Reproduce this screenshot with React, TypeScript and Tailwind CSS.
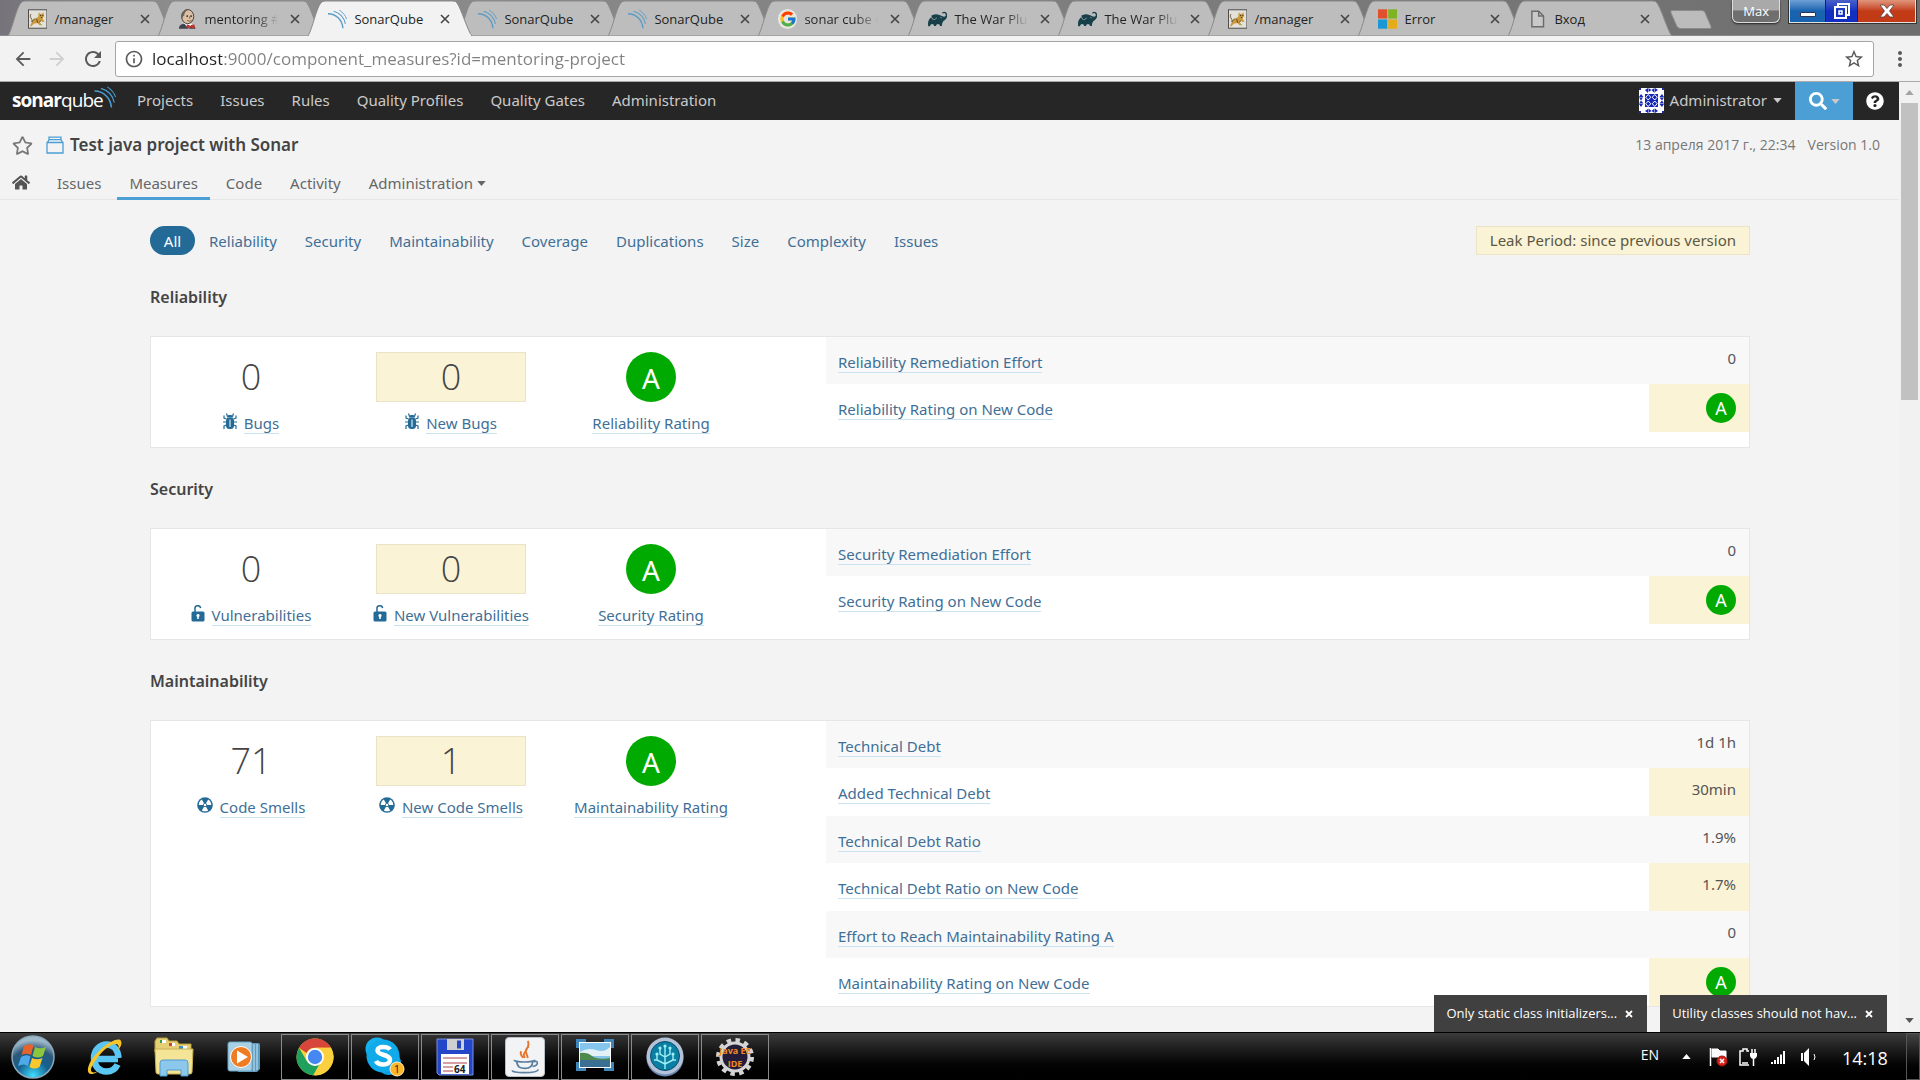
import React, { type ReactNode } from "react";
import { FaHome, FaQuestionCircle, FaRegStar, FaSearch } from "react-icons/fa";
import { FcGoogle } from "react-icons/fc";
import { SiGradle } from "react-icons/si";
import { MdArrowBack, MdArrowForward, MdInfoOutline, MdRefresh, MdStarBorder, MdMoreVert } from "react-icons/md";

/* ---------- small drawings ---------- */

function SonarWaves({ className, color = "#4b9fd5" }: { className: string; color?: string }) {
  return (
    <svg viewBox="0 0 24 24" className={className} fill="none" stroke={color} aria-hidden="true">
      <path d="M0 5.500C10 5.500 17.500 13 18.500 23.500" strokeWidth="1.700" />
      <path d="M7 2.500C14 4.500 20 10 21.500 18" strokeWidth="1.400" />
      <path d="M14 1C18.500 4 21.500 7.500 23 12" strokeWidth="1.100" />
    </svg>
  );
}

function Tomcat() {
  return (
    <svg viewBox="0 0 20 20" className="size-5" aria-hidden="true">
      <rect x="0.500" y="0.500" width="19" height="19" fill="#e4e2dc" stroke="#4a4a4a" />
      <path d="M11 3l1.500 1.500h2L16 3l.5 4-1.500 2.500 2 3.500h-2l-2-1.500-1 2 3 3h-3L9.500 14 6 15l-2.500 2.500H2L4 13l3-3.500 3.500-1.500z" fill="#c99a3f" />
      <path d="M3 5c-2 4 2 4 1 8M4 13l3-3.500M9 10l1 4M13 11.500l-1 2" stroke="#5c4315" strokeWidth="0.900" fill="none" />
      <path d="M12.500 6.500h1M14.800 6.500h1M13.500 8.500h1" stroke="#2b2110" />
    </svg>
  );
}

function Jenkins() {
  return (
    <svg viewBox="0 0 20 20" className="size-5" aria-hidden="true">
      <path d="M1 20c0-4 3-5 7-5s10 1 10 5z" fill="#3d4550" />
      <path d="M6 14l5 6 4-5z" fill="#fff" />
      <ellipse cx="10" cy="7.500" rx="6.200" ry="7.300" fill="#dcc0a4" stroke="#3b3028" strokeWidth="0.900" />
      <path d="M4 10C2 4 6 0 11 .5 8 1.500 6.500 3.500 6.500 6.500L5.500 7z" fill="#6f6258" />
      <circle cx="9.500" cy="7" r="0.900" fill="#222" />
      <circle cx="13.500" cy="7" r="0.900" fill="#222" />
      <path d="M9.500 11.500c2 1 3.500.8 4.500 0M12 7.500v2" stroke="#5c3a2a" strokeWidth="0.800" fill="none" />
      <path d="M9 15.500l4 1.500 4-1.500V20l-4-1.500L9 20z" fill="#c8322b" />
    </svg>
  );
}

function MicrosoftMark() {
  return (
    <svg viewBox="0 0 20 20" className="size-5" aria-hidden="true">
      <path d="M0 0h9.500v9.500H0z" fill="#e0502f" />
      <path d="M10.500 0H20v9.500h-9.500z" fill="#7fb421" />
      <path d="M0 10.500h9.500V20H0z" fill="#1a97d5" />
      <path d="M10.500 10.500H20V20h-9.500z" fill="#e5ac18" />
    </svg>
  );
}

function BlankPage() {
  return (
    <svg viewBox="0 0 20 20" className="size-5" fill="#c9c9c9" stroke="#6b6b6b" strokeWidth="1.500" aria-hidden="true">
      <path d="M4 2h7l5 5v11H4z" />
      <path d="M11 2v5h5" fill="none" />
    </svg>
  );
}

function GoogleMark() {
  return (
    <span className="flex size-5 items-center justify-center rounded-full bg-[#e6e6e6]">
      <FcGoogle className="size-[18px]" />
    </span>
  );
}

function Caret({ className }: { className: string }) {
  return (
    <svg viewBox="0 0 10 6" className={className} fill="currentColor" aria-hidden="true">
      <path d="M0 0h10L5 6z" />
    </svg>
  );
}

function BugIcon() {
  return (
    <svg viewBox="0 0 14 17" className="h-[17px] w-3.5" aria-hidden="true">
      <path
        d="M4.500 3.500L3.500.5M9.500 3.500l1-3M3.500 6L1 5V2.500M10.500 6L13 5V2.500M3 9H0M11 9h3M3.500 12L1 13v3M10.500 12l2.500 1v3"
        stroke="#236a97"
        strokeWidth="1.200"
        fill="none"
      />
      <path d="M4 4.500C4 2.500 5.300 2 7 2s3 .5 3 2.500z" fill="#236a97" />
      <rect x="3" y="4.500" width="8" height="11.500" rx="3.500" fill="#236a97" />
      <path d="M7 6.500V14" stroke="#fff" strokeWidth="1" />
    </svg>
  );
}

function UnlockIcon() {
  return (
    <svg viewBox="0 0 14 17" className="h-[17px] w-3.5" aria-hidden="true">
      <path d="M4 8V4a2.800 2.800 0 0 1 5.600-.8" stroke="#236a97" strokeWidth="1.500" fill="none" />
      <rect x="0.500" y="6.500" width="13" height="10" rx="1.500" fill="#236a97" />
      <path d="M7 9a1.600 1.600 0 0 1 .8 3v2H6.200v-2A1.600 1.600 0 0 1 7 9z" fill="#fff" />
    </svg>
  );
}

function SmellIcon() {
  return (
    <svg viewBox="0 0 16 16" className="size-4" aria-hidden="true">
      <circle cx="8" cy="8" r="7.800" fill="#236a97" />
      <path d="M7 6.200L4.800 2.600A6.300 6.300 0 0 0 1.800 8H6c0-.8.300-1.400 1-1.800z" fill="#fff" />
      <path d="M9 6.200l2.200-3.600a6.300 6.300 0 0 1 3 5.400H10c0-.8-.3-1.400-1-1.800z" fill="#fff" />
      <path d="M7 9.800l-2.200 3.600a6.300 6.300 0 0 0 6.400 0L9 9.800c-.6.400-1.400.4-2 0z" fill="#fff" />
      <circle cx="8" cy="8" r="1.300" fill="#fff" />
    </svg>
  );
}

function Identicon() {
  return (
    <svg viewBox="0 0 50 50" className="size-[25px]" aria-hidden="true">
      <rect width="50" height="50" fill="#fff" />
      <g fill="#1627b5">
        <path d="M12 12h26v26H12zM0 0h4v4H0zM46 0h4v4h-4zM0 46h4v4H0zM46 46h4v4h-4z" />
        <path d="M12 4l6-4v10zM25 4l-6 4V0zM25 4l6-4v10zM38 4l-6 4V0z" />
        <path d="M12 46l6-4v8zM25 46l-6 4v-9zM25 46l6-5v9zM38 46l-6 4v-9z" />
        <path d="M4 12l-4 6h9zM4 25l4-6H0zM4 25l-4 6h9zM4 38l4-6H0z" />
        <path d="M46 12l-5 6h9zM46 25l4-6h-9zM46 25l-5 6h9zM46 38l4-6h-9z" />
      </g>
      <g fill="none" stroke="#fff" strokeWidth="2">
        <path d="M18.500 13l5 5.500-5 5.500-5-5.500zM31.500 13l5 5.500-5 5.500-5-5.500zM18.500 26l5 5.500-5 5.500-5-5.500zM31.500 26l5 5.500-5 5.500-5-5.500z" />
      </g>
    </svg>
  );
}

function ProjectIcon() {
  return (
    <svg viewBox="0 0 18 18" className="size-[18px]" fill="none" stroke="#4b9fd5" strokeWidth="1.300" aria-hidden="true">
      <path d="M1 6.500h16V17H1zM1.500 6.500L3 3.700h12l1.500 2.800M3 3.700V1.200h12v2.500" />
    </svg>
  );
}

/* ---------- browser chrome ---------- */

type Tab = { title: string; icon: ReactNode; active?: boolean; fade?: boolean };

const waves = <SonarWaves className="size-5" color="#5a9cc4" />;
const gradle = <SiGradle className="size-5 text-[#17404a]" />;

const tabs: Tab[] = [
  { title: "/manager", icon: <Tomcat /> },
  { title: "mentoring #", icon: <Jenkins />, fade: true },
  { title: "SonarQube", icon: waves, active: true },
  { title: "SonarQube", icon: waves },
  { title: "SonarQube", icon: waves },
  { title: "sonar cube c", icon: <GoogleMark />, fade: true },
  { title: "The War Plu", icon: gradle, fade: true },
  { title: "The War Plu", icon: gradle, fade: true },
  { title: "/manager", icon: <Tomcat /> },
  { title: "Error", icon: <MicrosoftMark /> },
  { title: "Вход", icon: <BlankPage /> },
];

function BrowserTab({ tab }: { tab: Tab }) {
  return (
    <div className={tab.active ? "relative z-10 h-9 w-[150px] shrink-0" : "relative h-9 w-[150px] shrink-0"}>
      <svg viewBox="0 0 164 36" className="absolute left-0 top-0 h-9 w-[164px]" aria-hidden="true">
        <path
          d="M0 36C4 30 9 6 13 3q1-2 4-2h128q3 0 4 2C153 8 160 32 164 36z"
          fill={tab.active ? "#f2f2f2" : "#bdbdbd"}
          stroke="#8a8a8a"
        />
        {tab.active && <path d="M1 35.500h162" stroke="#f2f2f2" strokeWidth="2" />}
      </svg>
      <div className="relative flex h-[35px] w-[142px] items-center pl-5 pt-0.5">
        {tab.icon}
        <button
          type="button"
          className={
            tab.fade
              ? "ml-[7px] w-20 whitespace-nowrap bg-linear-to-r from-[#222] from-65% to-[#bdbdbd] to-95% bg-clip-text text-left text-[13px] leading-5 text-transparent"
              : "ml-[7px] w-20 whitespace-nowrap text-left text-[13px] leading-5 text-[#222]"
          }
        >
          {tab.title}
        </button>
        <button type="button" aria-label={"Close " + tab.title} className="ml-2 text-[#444]">
          <svg viewBox="0 0 10 10" className="size-2.5" stroke="currentColor" strokeWidth="1.600" aria-hidden="true">
            <path d="M1 1l8 8M9 1L1 9" />
          </svg>
        </button>
      </div>
    </div>
  );
}

function WindowControls() {
  return (
    <div className="ml-auto flex items-start">
      <button
        type="button"
        className="h-[23px] rounded-b-md border border-t-0 border-[#dcdcdc] bg-linear-to-b from-[#a9a9a9] from-45% to-[#6f6f6f] to-50% px-2.5 text-[13px] leading-5 text-white shadow-[0_1px_2px_#222]"
      >
        Max
      </button>
      <div className="ml-[9px] mr-1 flex h-[23px] border border-t-0 border-[#e2e2e2] outline-1 outline-[#333]">
        <button type="button" aria-label="Minimize" className="flex w-9 items-center justify-center border-r border-[#223] bg-linear-to-b from-[#6da0d6] to-[#1763b0] to-50%">
          <svg viewBox="0 0 16 16" className="size-4" aria-hidden="true">
            <path d="M0.500 9.500h15v4H.5z" fill="#fff" stroke="#335" />
          </svg>
        </button>
        <button type="button" aria-label="Restore" className="flex w-8 items-center justify-center border-r border-[#223] bg-linear-to-b from-[#4a5fc9] to-[#122fc0] to-50%">
          <svg viewBox="0 0 18 18" className="size-[18px]" fill="none" stroke="#fff" strokeWidth="2" aria-hidden="true">
            <path d="M5 4V2h11v11h-2" />
            <path d="M2 5h11v11H2z" />
            <path d="M6 9h3v3H6z" strokeWidth="1.500" />
          </svg>
        </button>
        <button type="button" aria-label="Close" className="flex w-[57px] items-center justify-center bg-linear-to-b from-[#e0957c] to-[#c23a16] to-50%">
          <svg viewBox="0 0 16 16" className="size-4" aria-hidden="true">
            <path d="M1 2h4l3 3.500L11 2h4L10.500 8l4.500 6h-4L8 10.500 5 14H1l4.500-6z" fill="#fff" stroke="#544" strokeWidth="0.800" />
          </svg>
        </button>
      </div>
    </div>
  );
}

function BrowserChrome() {
  return (
    <div className="shrink-0">
      <div className="flex h-9 border-b border-[#8a8a8a] bg-linear-to-r from-[#77737b] via-[#8f8f8f] via-10% to-[#6e6e6e] pl-2">
        {tabs.map((tab, i) => (
          <BrowserTab key={i} tab={tab} />
        ))}
        <button type="button" aria-label="New tab" className="ml-3 mt-2.5 h-[19px] self-start">
          <svg viewBox="0 0 42 19" className="h-[19px] w-[42px]" aria-hidden="true">
            <path d="M2 .5h30q2 0 3 2l6 14q1 2-2 2H11q-3 0-4-2L1 3Q0 1 2 .5z" fill="#bcbcbc" stroke="#8c8c8c" />
          </svg>
        </button>
        <WindowControls />
      </div>
      <div className="flex h-[46px] items-center border-b border-[#a9a9a9] bg-[#f2f2f2] pl-3 pr-3 text-[#5a5a5a]">
        <button type="button" aria-label="Back"><MdArrowBack className="size-[22px]" /></button>
        <button type="button" aria-label="Forward" className="ml-3 text-[#cfcfcf]"><MdArrowForward className="size-[22px]" /></button>
        <button type="button" aria-label="Reload" className="ml-[13px]"><MdRefresh className="size-6" /></button>
        <div className="ml-2.5 flex h-9 flex-1 items-center rounded-[3px] border border-[#a6a6a6] bg-white px-2">
          <MdInfoOutline className="size-5" />
          <input
            aria-label="Address"
            defaultValue="localhost:9000/component_measures?id=mentoring-project"
            className="ml-2 min-w-0 flex-1 bg-linear-to-r from-[#222] from-[70px] to-[#808080] to-[70px] bg-clip-text text-[17px] text-transparent outline-none"
          />
          <button type="button" aria-label="Bookmark"><MdStarBorder className="size-[22px]" /></button>
        </div>
        <button type="button" aria-label="Menu" className="ml-3.5"><MdMoreVert className="-mr-1 size-6" /></button>
      </div>
    </div>
  );
}

/* ---------- SonarQube page ---------- */

const mainNav = ["Projects", "Issues", "Rules", "Quality Profiles", "Quality Gates", "Administration"];

function TopNav() {
  return (
    <nav className="flex h-[38px] items-center gap-px bg-[#262626] pb-px text-[15px] text-[#cacaca]">
      <a href="#home" className="flex w-[123px] items-center pl-3 font-['Open_Sans',sans-serif] text-[19px] text-white" aria-label="sonarqube">
        <span className="font-bold tracking-tighter">sonar</span>
        <span className="tracking-tighter">qube</span>
        <SonarWaves className="-ml-2.5 mb-2 h-[22px] w-[25px] shrink-0" />
      </a>
      {mainNav.map((item) => (
        <a key={item} href="#nav" className="px-[13px]">{item}</a>
      ))}
      <a href="#account" className="ml-auto flex items-center pr-3">
        <Identicon />
        <span className="ml-1.5 mr-1.5">Administrator</span>
        <Caret className="h-[5px] w-[9px]" />
      </a>
      <button type="button" aria-label="Search" className="-mb-px flex h-[38px] w-[58px] items-center justify-center gap-1 bg-[#4b9fd5]">
        <FaSearch className="size-[18px] text-white" />
        <Caret className="h-[5px] w-[9px]" />
      </button>
      <button type="button" aria-label="Help" className="flex h-full w-[45px] items-center justify-center pr-1 text-white">
        <FaQuestionCircle className="size-[18px]" />
      </button>
    </nav>
  );
}

const projectTabs = [
  { label: "Issues" },
  { label: "Measures", active: true },
  { label: "Code" },
  { label: "Activity" },
  { label: "Administration", menu: true },
];

function ProjectHeader() {
  return (
    <header className="border-b border-[#e6e6e6]">
      <div className="flex h-[50px] items-center pl-3 pr-[19px]">
        <button type="button" aria-label="Favorite" className="text-[#777]"><FaRegStar className="size-[21px]" /></button>
        <span className="ml-[13px]"><ProjectIcon /></span>
        <h1 className="ml-1.5 text-[17px] font-semibold text-[#444]">Test java project with Sonar</h1>
        <span className="ml-auto font-['Open_Sans',sans-serif] text-sm text-[#777]">13 апреля 2017 г., 22:34</span>
        <span className="ml-3 font-['Open_Sans',sans-serif] text-sm text-[#777]">Version 1.0</span>
      </div>
      <nav className="flex h-[29px] pl-3 text-[15px] text-[#666]">
        <a href="#home" aria-label="Home" className="mr-[15px] flex w-[18px] items-center pb-1 text-[#555]">
          <FaHome className="size-[19px]" />
        </a>
        {projectTabs.map((tab) => (
          <a
            key={tab.label}
            href="#tab"
            className={
              tab.active
                ? "-mb-px mr-1 flex h-[30px] items-center border-b-3 border-[#4b9fd5] px-3"
                : "-mb-px mr-1 flex h-[30px] items-center border-b-3 border-transparent px-3"
            }
          >
            {tab.label}
            {tab.menu && <Caret className="ml-1 h-[5px] w-[9px]" />}
          </a>
        ))}
      </nav>
    </header>
  );
}

const filters = ["Reliability", "Security", "Maintainability", "Coverage", "Duplications", "Size", "Complexity", "Issues"];

function Filters() {
  return (
    <div className="flex h-[29px] items-center text-[15px] text-[#3f6f96]">
      <a href="#all" className="flex h-full w-[45px] items-center justify-center rounded-full bg-[#236a97] pt-0.5 text-white">All</a>
      {filters.map((f) => (
        <a key={f} href="#filter" className="px-3.5 pt-0.5">{f}</a>
      ))}
      <span className="ml-auto flex h-full items-center border border-[#eae3c7] bg-[#fbf3d5] px-[13px] text-[#5a5844]">
        Leak Period: since previous version
      </span>
    </div>
  );
}

type Metric = { label: string; value: string; leak?: boolean; rating?: boolean };
type Domain = { name: string; icon: ReactNode; main: [string, string]; fresh: [string, string]; metrics: Metric[] };

const domains: Domain[] = [
  {
    name: "Reliability",
    icon: <BugIcon />,
    main: ["0", "Bugs"],
    fresh: ["0", "New Bugs"],
    metrics: [
      { label: "Reliability Remediation Effort", value: "0" },
      { label: "Reliability Rating on New Code", value: "A", leak: true, rating: true },
    ],
  },
  {
    name: "Security",
    icon: <UnlockIcon />,
    main: ["0", "Vulnerabilities"],
    fresh: ["0", "New Vulnerabilities"],
    metrics: [
      { label: "Security Remediation Effort", value: "0" },
      { label: "Security Rating on New Code", value: "A", leak: true, rating: true },
    ],
  },
  {
    name: "Maintainability",
    icon: <SmellIcon />,
    main: ["71", "Code Smells"],
    fresh: ["1", "New Code Smells"],
    metrics: [
      { label: "Technical Debt", value: "1d 1h" },
      { label: "Added Technical Debt", value: "30min", leak: true },
      { label: "Technical Debt Ratio", value: "1.9%" },
      { label: "Technical Debt Ratio on New Code", value: "1.7%", leak: true },
      { label: "Effort to Reach Maintainability Rating A", value: "0" },
      { label: "Maintainability Rating on New Code", value: "A", leak: true, rating: true },
    ],
  },
];

function MeasureLink({ children }: { children: ReactNode }) {
  return (
    <a href="#measure" className="block w-fit whitespace-nowrap border-b border-[#cae3f2] text-[15px] leading-5 text-[#3f6f96]">
      {children}
    </a>
  );
}

function Figure({ value, label, icon, leak }: { value: ReactNode; label: string; icon?: ReactNode; leak?: boolean }) {
  return (
    <div className="flex w-[200px] shrink-0 flex-col items-center">
      <div
        className={
          leak
            ? "flex h-[50px] w-[150px] items-center justify-center border border-[#eae3c7] bg-[#fbf3d5]"
            : "flex h-[50px] w-[150px] items-center justify-center"
        }
      >
        {value}
      </div>
      <div className="mt-[11px] flex items-start gap-[7px]">
        {icon}
        <MeasureLink>{label}</MeasureLink>
      </div>
    </div>
  );
}

function BigNumber({ children }: { children: ReactNode }) {
  return <span className="font-['Open_Sans',sans-serif] text-4xl font-light text-[#444]">{children}</span>;
}

function DomainSection({ domain }: { domain: Domain }) {
  return (
    <section className="flex flex-col gap-[27px]">
      <h2 className="text-base font-semibold text-[#444]">{domain.name}</h2>
      <div className="flex border border-[#e6e6e6] bg-white">
        <div className="flex w-[675px] shrink-0 pb-[13px] pt-[15px]">
          <Figure value={<BigNumber>{domain.main[0]}</BigNumber>} label={domain.main[1]} icon={domain.icon} />
          <Figure value={<BigNumber>{domain.fresh[0]}</BigNumber>} label={domain.fresh[1]} icon={domain.icon} leak />
          <Figure
            value={
              <span className="flex size-[50px] items-center justify-center rounded-full bg-[#0a0] pt-0.5 text-[28px] leading-none text-white">A</span>
            }
            label={domain.name + " Rating"}
          />
        </div>
        <table className="flex-1 self-start">
          <tbody className="block">
            {domain.metrics.map((m) => (
              <tr key={m.label} className="flex odd:h-[47px] odd:bg-[#f8f8f8] even:h-12">
                <td className="flex-1 pl-3 pt-[15px]">
                  <MeasureLink>{m.label}</MeasureLink>
                </td>
                <td
                  className={
                    m.leak
                      ? "flex w-[100px] justify-end bg-[#fbf3d5] pr-[13px] pt-[9px] text-[15px] leading-6 text-[#555]"
                      : "flex w-[100px] justify-end pr-[13px] pt-[9px] text-[15px] leading-6 text-[#555]"
                  }
                >
                  {m.rating ? (
                    <span className="flex size-[30px] items-center justify-center rounded-full bg-[#0a0] text-lg leading-none text-white">A</span>
                  ) : (
                    m.value
                  )}
                </td>
              </tr>
            ))}
          </tbody>
        </table>
      </div>
    </section>
  );
}

function ScrollBar() {
  return (
    <div className="flex w-[21px] shrink-0 flex-col items-center bg-[#f1f1f1] text-[#555]">
      <div className="flex h-[21px] items-center"><Caret className="h-[5px] w-[9px] rotate-180 text-[#a3a3a3]" /></div>
      <div className="h-[297px] w-[17px] bg-[#c1c1c1]" />
      <div className="mt-auto flex h-6 items-center"><Caret className="h-[5px] w-[9px]" /></div>
    </div>
  );
}

function Toast({ children }: { children: ReactNode }) {
  return (
    <div className="flex h-[37px] items-center gap-2 bg-[#404040] pl-3 pr-3.5 text-[13px] text-white">
      {children}
      <button type="button" aria-label="Dismiss">
        <svg viewBox="0 0 8 8" className="size-2" stroke="currentColor" strokeWidth="1.800" aria-hidden="true">
          <path d="M1 1l6 6M7 1L1 7" />
        </svg>
      </button>
    </div>
  );
}

/* ---------- Windows taskbar ---------- */

function StartOrb() {
  return (
    <svg viewBox="0 0 44 44" className="size-11" aria-hidden="true">
      <defs>
        <radialGradient id="orb" cx="50%" cy="95%" r="85%">
          <stop offset="0" stopColor="#3fe0ff" />
          <stop offset="0.450" stopColor="#14608f" />
          <stop offset="0.750" stopColor="#2d5878" />
          <stop offset="1" stopColor="#9db8c9" />
        </radialGradient>
      </defs>
      <circle cx="22" cy="22" r="21" fill="url(#orb)" stroke="#8aa9bd" strokeWidth="1.500" />
      <path d="M13 11q5-3 9.500-.5L20 20q-5-2.500-9.500 0z" fill="#e8622c" />
      <path d="M24 12q5 2.500 11 0l-3 9q-5 3-10.500 0z" fill="#8cc63f" />
      <path d="M10 22q5-3 9.500-.5L17 31q-4-3-10 0z" fill="#4fa9e8" />
      <path d="M21 23q5 2.500 10.500 0L28.500 32q-5 3-10 0z" fill="#fdc82f" />
    </svg>
  );
}

function ExplorerE() {
  return (
    <svg viewBox="0 0 40 40" className="size-10" fill="none" aria-hidden="true">
      <path d="M34 22H13M34.500 21C34 12 29 7.500 22.500 7.500S10 13 10 21s5 13.500 12.500 13.500c5 0 9-2.500 11-7" stroke="#5cc6f2" strokeWidth="6.500" />
      <path d="M7 37C1 36 4 25 14 15S35 0 37 4c1.500 3-1 7-3 9 1-3 1-6-2-6-5 0-13 6-18 13S5 33 8 35c2 1 4 0 6-1-2 2-5 3.500-7 3z" fill="#f6c52c" />
    </svg>
  );
}

function FolderIcon() {
  return (
    <svg viewBox="0 0 40 40" className="size-10" aria-hidden="true">
      <path d="M1 4l2-3h10l2 3h8l2 3h12v8H1z" fill="#e5cf74" stroke="#b79c3c" />
      <path d="M6 3h6v3H6zM15 6h6v3h-6zM25 9h8v3h-8z" fill="#fff" />
      <path d="M6 3h2v3H6z" fill="#38a048" />
      <path d="M15 6h3v3h-3z" fill="#d0442e" />
      <path d="M25 9h4v3h-4z" fill="#3a8fd0" />
      <path d="M1 12h38l-1 23q0 2-2 2H4q-2 0-2-2z" fill="#f4e496" stroke="#c9b052" />
      <path d="M6 39V26q0-3 3-3h22q3 0 3 3v13h-7v-6H13v6z" fill="#8cc8ec" stroke="#4f9bd0" />
    </svg>
  );
}

function MediaPlayer() {
  return (
    <svg viewBox="0 0 36 36" className="size-9" aria-hidden="true">
      <path d="M12 4h20q2 0 2 2v24l-3 3H12z" fill="#5a9cc0" />
      <path d="M28 5v27M31 5v26" stroke="#cfe7f3" />
      <rect x="2" y="3" width="24" height="29" rx="2" fill="#a9d0e4" stroke="#6ba3c2" />
      <circle cx="15" cy="18" r="10.500" fill="#ef7b22" stroke="#fff" />
      <path d="M11 11.500l11 6.500-11 6.500z" fill="#fff" />
    </svg>
  );
}

function ChromeIcon() {
  return (
    <svg viewBox="0 0 40 40" className="size-10" aria-hidden="true">
      <circle cx="20" cy="20" r="18.500" fill="#fbd03f" />
      <path d="M4 10.700A18.500 18.500 0 0 1 36 10.700H20a9.300 9.300 0 0 0-8.500 5.300z" fill="#d8453a" />
      <path d="M4 10.700a18.500 18.500 0 0 0 14 27.700l8-13.800a9.300 9.300 0 0 1-14 0z" fill="#1fa15d" />
      <path d="M36 10.700H20a9.300 9.300 0 0 1 8 13.900l-8 13.900A18.500 18.500 0 0 0 36 10.700z" fill="#fbd03f" />
      <circle cx="20" cy="20" r="9" fill="#fff" />
      <circle cx="20" cy="20" r="7.200" fill="#4688f1" />
    </svg>
  );
}

function SkypeIcon() {
  return (
    <svg viewBox="0 0 42 42" className="size-[42px]" aria-hidden="true">
      <circle cx="13" cy="13" r="11.500" fill="#16b1ef" />
      <circle cx="25" cy="27" r="12" fill="#0c9fe0" />
      <circle cx="19" cy="20" r="16.500" fill="#10a9e9" />
      <path d="M26 13.500c-2-3-12-4-12.500 1-.3 5 12.500 3.500 12.500 9.500 0 6-12 5.500-14 1" fill="none" stroke="#fff" strokeWidth="4.500" />
      <circle cx="33" cy="33" r="7" fill="#fdb52b" stroke="#fff0c8" />
      <text x="33" y="37" textAnchor="middle" fontSize="11" fill="#222">1</text>
    </svg>
  );
}

function FloppyIcon() {
  return (
    <svg viewBox="0 0 38 38" className="size-[38px]" aria-hidden="true">
      <path d="M1 1h36v36H3l-2-2z" fill="#2446c8" stroke="#7d8fd8" />
      <path d="M11 1h17v11H11z" fill="#cfcfd2" />
      <path d="M21 2.500h4v8h-4z" fill="#2446c8" />
      <path d="M5 16h28v20H5z" fill="#fff" />
      <path d="M7 20h24M7 25h24M7 29h10M7 33h10" stroke="#b04048" />
      <text x="18" y="35" fontSize="10" fontWeight="700" fill="#222">64</text>
    </svg>
  );
}

function JavaIcon() {
  return (
    <span className="flex size-10 items-center justify-center rounded border border-[#b9bfc8] bg-[#f1f3f5]">
      <svg viewBox="0 0 40 40" className="size-10" fill="none" stroke="#5b7f9e" strokeWidth="1.800" aria-hidden="true">
        <path d="M20 21c-5-6 7-9 3-18M24 9c-5 4-3 5-1 12M16 14c-2 3 1 5 2 7" stroke="#e5762b" strokeWidth="2" />
        <path d="M9 23c-2 3 22 3 21 0M11 24c1 7 4 8 9 8s8-2 8-7M29 25c6-2 5 4-1 5" />
        <path d="M7 34c-3 3 26 4 27-1" />
      </svg>
    </span>
  );
}

function PictureIcon() {
  return (
    <svg viewBox="0 0 38 32" className="mb-1 h-8 w-[38px]" aria-hidden="true">
      <path d="M0 0h10v9H0zM28 0h10v9H28zM0 23h10v9H0zM28 23h10v9H28z" fill="#3f86bb" />
      <rect x="3" y="3" width="32" height="26" fill="#fff" />
      <rect x="4" y="4" width="30" height="24" fill="#86c5ee" />
      <path d="M4 13q8-5 16-2t14-3v9H4z" fill="#e4f2f8" />
      <path d="M4 14q7-1 12 3t18 2v3H4z" fill="#4f8a4d" />
      <path d="M4 21h30v7H4z" fill="#3a6f93" />
    </svg>
  );
}

function TreeDisc() {
  return (
    <svg viewBox="0 0 40 40" className="size-10" aria-hidden="true">
      <circle cx="20" cy="21" r="18.500" fill="#6c86b0" />
      <circle cx="20" cy="19" r="18.500" fill="#b4c2d8" />
      <circle cx="20" cy="19" r="14.500" fill="#0b7fa3" stroke="#0a4d70" />
      <path
        d="M20 32V9M20 27l8-4v-5M20 27l-8-4v-5M20 20l5-3v-6M20 20l-5-3v-6M28 23h3M12 23H9"
        stroke="#9ff0f2"
        strokeWidth="1.400"
        fill="none"
      />
      <g fill="#9ff0f2">
        <circle cx="20" cy="9" r="1.600" /><circle cx="28" cy="17" r="1.600" /><circle cx="12" cy="17" r="1.600" />
        <circle cx="25" cy="11" r="1.600" /><circle cx="15" cy="11" r="1.600" />
      </g>
    </svg>
  );
}

function EclipseGear() {
  return (
    <svg viewBox="0 0 40 40" className="size-10" aria-hidden="true">
      <circle cx="20" cy="20" r="17" fill="none" stroke="#d4d4d4" strokeWidth="4" strokeDasharray="4.500 4.400" />
      <circle cx="20" cy="20" r="14" fill="#241b38" stroke="#d4d4d4" strokeWidth="3" />
      <text x="20" y="17" textAnchor="middle" fontSize="9" fontWeight="700" fill="#f08a24">Java EE</text>
      <text x="20" y="30" textAnchor="middle" fontSize="9" fontWeight="700" fill="#f08a24">IDE</text>
    </svg>
  );
}

const pinned = [
  { name: "Internet Explorer", icon: <ExplorerE /> },
  { name: "Explorer", icon: <FolderIcon /> },
  { name: "Media Player", icon: <MediaPlayer /> },
];

const running = [
  { name: "Chrome", icon: <ChromeIcon /> },
  { name: "Skype", icon: <SkypeIcon /> },
  { name: "Total Commander", icon: <FloppyIcon /> },
  { name: "Java", icon: <JavaIcon /> },
  { name: "Pictures", icon: <PictureIcon /> },
  { name: "SourceTree", icon: <TreeDisc /> },
  { name: "Eclipse", icon: <EclipseGear /> },
];

function Taskbar() {
  return (
    <footer className="flex h-12 shrink-0 items-center border-t border-black bg-linear-to-b from-[#3c3c3c] via-[#111] via-50% to-black text-white">
      <button type="button" aria-label="Start" className="ml-[11px] mr-3.5"><StartOrb /></button>
      <div className="mr-0.5 flex">
        {pinned.map((p) => (
          <button key={p.name} type="button" aria-label={p.name} className="flex h-[46px] w-[70px] items-center justify-center">{p.icon}</button>
        ))}
      </div>
      <div className="flex gap-0.5">
        {running.map((r) => (
          <button
            key={r.name}
            type="button"
            aria-label={r.name}
            className="flex h-[46px] w-[68px] items-center justify-center border border-[#8a8a8a] bg-linear-to-b from-[#333] via-[#0c0c0c] via-50% to-black"
          >
            {r.icon}
          </button>
        ))}
      </div>
      <div className="ml-auto flex h-full items-center">
        <span className="mb-1 text-sm">EN</span>
        <Caret className="ml-[23px] h-[5px] w-[9px] rotate-180" />
        <svg viewBox="0 0 110 20" className="ml-[18px] h-5 w-[110px]" fill="none" stroke="#fff" aria-hidden="true">
          <path d="M1.500 1v18" strokeWidth="1.500" />
          <path d="M3 2h6l2 2h6v8h-6l-2-2H3z" fill="#fff" />
          <circle cx="13" cy="14" r="5" fill="#d8231c" stroke="#a11" />
          <path d="M11 12l4 4M15 12l-4 4" strokeWidth="1.500" />
          <path d="M40 4h-2V2h-4v2h-3v14h9" strokeWidth="1.500" />
          <path d="M33 16h6M43 2v4M46 2v4M44.500 11v8" strokeWidth="1.500" />
          <path d="M41 6h7v3q-1 3-3.500 3T41 9z" fill="#fff" stroke="none" />
          <path d="M63 15v2M66 13v4M69 10v7M72 7.500V17M75 4v13" strokeWidth="2" />
          <path d="M92 6h2v8h-2zM95 6l5-5v18l-5-5z" fill="#fff" stroke="none" />
          <path d="M105 7q2 3 0 6" />
        </svg>
        <span className="ml-[23px] w-[50px] pt-0.5 text-lg">14:18</span>
        <button type="button" aria-label="Show desktop" className="ml-3.5 h-full w-3.5 border border-[#555] bg-linear-to-b from-[#444] to-black" />
      </div>
    </footer>
  );
}

export default function App() {
  return (
    <div className='flex h-screen flex-col overflow-hidden bg-[#f3f3f3] font-["Open_Sans","Noto_Sans",sans-serif]'>
      <BrowserChrome />
      <div className="relative flex min-h-0 flex-1">
        <div className='min-w-0 flex-1 overflow-hidden font-["Noto_Sans",sans-serif]'>
          <TopNav />
          <ProjectHeader />
          <main className="pl-[150px] pr-[149px] pt-[26px]">
            <Filters />
            <div className="mt-[30px] flex flex-col gap-[29px]">
              {domains.map((d) => (
                <DomainSection key={d.name} domain={d} />
              ))}
            </div>
          </main>
        </div>
        <ScrollBar />
        <div className="absolute bottom-0 right-[33px] flex gap-[13px]">
          <Toast>Only static class initializers...</Toast>
          <Toast>Utility classes should not hav...</Toast>
        </div>
      </div>
      <Taskbar />
    </div>
  );
}
